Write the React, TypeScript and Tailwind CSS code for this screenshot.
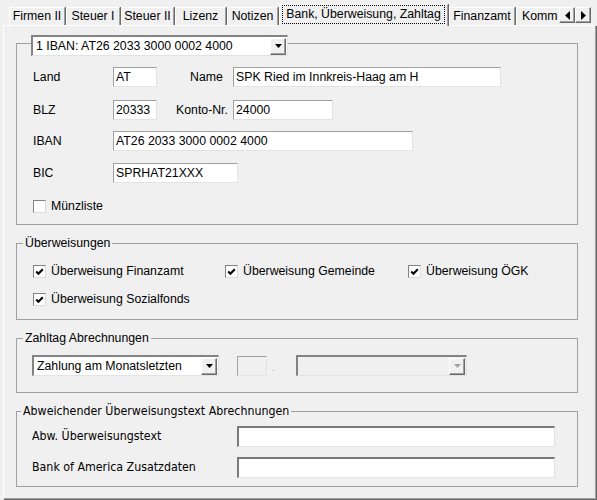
import React from "react";

const F = "font-['Liberation_Sans',Arial,sans-serif]";
const N = "font-['Liberation_Sans_Narrow','Arial_Narrow','DejaVu_Sans_Condensed',sans-serif]";

const Down = ({ gray }: { gray?: boolean }) => (
  <svg width="7" height="4" viewBox="0 0 7 4">
    <polygon points="0,0 7,0 3.5,4" fill={gray ? "#a0a0a0" : "#000"} />
  </svg>
);

const Combo = ({ className, text, disabled }: { className: string; text?: string; disabled?: boolean }) => (
  <div
    className={`flex items-center h-[21px] border-t-2 border-l-2 border-r border-b border-t-[#838383] border-l-[#838383] border-r-[#e3e3e3] border-b-[#e3e3e3] ${
      disabled ? "bg-[#f0f0f0]" : "bg-white"
    } ${className}`}
  >
    <span className="pl-[3px] flex-1 whitespace-nowrap overflow-hidden">{text}</span>
    <span className="flex-none mr-[1px] w-[16px] h-[17px] flex items-center justify-center bg-[#f0f0f0] border-t border-l border-r border-b border-t-white border-l-white border-r-[#696969] border-b-[#696969] shadow-[inset_-1px_-1px_0_#a0a0a0]">
      <Down gray={disabled} />
    </span>
  </div>
);

const Input = ({ className, value }: { className: string; value?: string }) => (
  <div
    className={`flex-none h-[20px] bg-white border border-t-[#a0a0a0] border-l-[#a0a0a0] border-r-[#e3e3e3] border-b-[#e3e3e3] pl-[2px] flex items-center whitespace-nowrap ${className}`}
  >
    {value}
  </div>
);

const Input3D = ({ className }: { className: string }) => (
  <div
    className={`flex-none h-[21px] bg-white border-t-2 border-l-2 border-r border-b border-t-[#7a7a7a] border-l-[#7a7a7a] border-r-[#e3e3e3] border-b-[#e3e3e3] ${className}`}
  />
);

const Check = ({ checked }: { checked?: boolean }) => (
  <span className="flex-none w-[13px] h-[13px] bg-white border border-t-[#838383] border-l-[#838383] border-r-[#dcdcdc] border-b-[#dcdcdc] flex items-center justify-center">
    {checked && (
      <svg width="9" height="8" viewBox="0 0 9 8">
        <path d="M1.2 3.6 L3.4 5.8 L7.8 1.2" stroke="#000" strokeWidth="2.1" fill="none" />
      </svg>
    )}
  </span>
);

const CheckLabel = ({ className, label, checked }: { className: string; label: string; checked?: boolean }) => (
  <div className={`flex items-center flex-none ${className}`}>
    <Check checked={checked} />
    <span className="ml-[5px] whitespace-nowrap">{label}</span>
  </div>
);

const Tab = ({ className, children }: { className: string; children: React.ReactNode }) => (
  <div
    className={`flex-none h-[18px] mb-[1px] bg-[#f0f0f0] border-t border-l border-r border-t-white border-l-white border-r-[#a0a0a0] shadow-[1px_0_0_#696969] flex items-center justify-center whitespace-nowrap ${className}`}
  >
    {children}
  </div>
);

const ScrollBtn = ({ dir }: { dir: "l" | "r" }) => (
  <div className="w-[16px] h-[16px] bg-[#f0f0f0] border-t border-l border-r border-b border-t-white border-l-white border-r-[#696969] border-b-[#696969] shadow-[inset_-1px_-1px_0_#a0a0a0] flex items-center justify-center">
    <svg width="5" height="9" viewBox="0 0 5 9">
      <polygon points={dir === "l" ? "5,0 5,9 0,4.5" : "0,0 0,9 5,4.5"} fill="#000" />
    </svg>
  </div>
);

export default function App() {
  return (
    <div className={`w-[597px] h-[500px] bg-[#f0f0f0] overflow-hidden text-[12.3px] leading-[15px] text-black ${F}`}>
      {/* tab strip */}
      <div className="relative z-10 flex h-[26px]">
        <div className="flex items-end pl-[9px] w-[559px] overflow-hidden flex-none">
          <Tab className="w-[56px] mr-[1px]">Firmen II</Tab>
          <Tab className="w-[54px] mr-[1px]">Steuer I</Tab>
          <Tab className="w-[53px] mr-[1px]">Steuer II</Tab>
          <Tab className="w-[51px] mr-[1px]">Lizenz</Tab>
          <Tab className="w-[51px] mr-[1px]">Notizen</Tab>
          <div className="flex-none w-[169px] h-[22px] mr-[1px] bg-[#f0f0f0] border-t border-l border-r border-t-white border-l-white border-r-[#a0a0a0] shadow-[1px_0_0_#696969] px-[2px]">
            <div className="mt-0 h-[19px] border border-dotted border-black flex items-center justify-center whitespace-nowrap">
              Bank, Überweisung, Zahltag
            </div>
          </div>
          <Tab className="w-[66px] mr-[1px]">Finanzamt</Tab>
          <div className="flex-none w-[43px] h-[18px] mb-[1px] bg-[#f0f0f0] border-t border-l border-t-white border-l-white flex items-center pl-[5px] whitespace-nowrap">
            Komm
          </div>
        </div>
        <div className="flex mt-[7px]">
          <ScrollBtn dir="l" />
          <ScrollBtn dir="r" />
        </div>
      </div>

      {/* panel */}
      <div className="relative -mt-[1px] ml-[3px] w-[593px] h-[474px] border border-t-white border-l-white border-r-[#a0a0a0] border-b-[#a0a0a0] shadow-[1px_1px_0_#696969] pl-[12px]">
        {/* Bank */}
        <fieldset className="mt-[5px] w-[562px] border border-[#a0a0a0]">
          <legend className="ml-[14px] pt-[4px]">
            <Combo className="w-[257px]" text="1 IBAN: AT26 2033 3000 0002 4000" />
          </legend>
          <div className="pl-[16px] pb-[11px]">
            <div className="mt-[11px] flex items-center h-[20px]">
              <span className="w-[80px] flex-none">Land</span>
              <Input className="w-[44px]" value="AT" />
              <span className="ml-[33px] w-[43px] flex-none">Name</span>
              <Input className="w-[268px]" value="SPK Ried im Innkreis-Haag am H" />
            </div>
            <div className="mt-[13px] flex items-center h-[20px]">
              <span className="w-[80px] flex-none">BLZ</span>
              <Input className="w-[44px]" value="20333" />
              <span className="ml-[19px] w-[57px] flex-none whitespace-nowrap">Konto-Nr.</span>
              <Input className="w-[100px]" value="24000" />
            </div>
            <div className="mt-[11px] flex items-center h-[20px]">
              <span className="w-[80px] flex-none">IBAN</span>
              <Input className="w-[300px]" value="AT26 2033 3000 0002 4000" />
            </div>
            <div className="mt-[12px] flex items-center h-[20px]">
              <span className="w-[80px] flex-none">BIC</span>
              <Input className="w-[125px]" value="SPRHAT21XXX" />
            </div>
            <div className="mt-[17px] flex items-center h-[13px]">
              <CheckLabel className="" label="Münzliste" />
            </div>
          </div>
        </fieldset>

        {/* Überweisungen */}
        <fieldset className="mt-[11px] w-[562px] border border-[#a0a0a0]">
          <legend className="ml-[6px] px-[2px]">Überweisungen</legend>
          <div className="pl-[16px] pb-[12px]">
            <div className="mt-[13px] flex items-center h-[15px]">
              <CheckLabel className="w-[192px]" label="Überweisung Finanzamt" checked />
              <CheckLabel className="w-[183px]" label="Überweisung Gemeinde" checked />
              <CheckLabel className="" label="Überweisung ÖGK" checked />
            </div>
            <div className="mt-[13px] flex items-center h-[15px]">
              <CheckLabel className="" label="Überweisung Sozialfonds" checked />
            </div>
          </div>
        </fieldset>

        {/* Zahltag */}
        <fieldset className="mt-[11px] w-[562px] border border-[#a0a0a0]">
          <legend className="ml-[6px] px-[2px]">Zahltag Abrechnungen</legend>
          <div className="pl-[15px] pb-[16px]">
            <div className="mt-[9px] flex items-center h-[21px]">
              <Combo className="w-[187px] flex-none" text="Zahlung am Monatsletzten" />
              <div className="ml-[18px] w-[30px] h-[20px] flex-none bg-[#f0f0f0] border border-t-[#a0a0a0] border-l-[#a0a0a0] border-r-[#e3e3e3] border-b-[#e3e3e3]" />
              <span className="ml-[6px] mt-[10px] w-[1px] h-[1px] bg-[#a0a0a0] flex-none" />
              <Combo className="ml-[22px] w-[171px] flex-none" disabled />
            </div>
          </div>
        </fieldset>

        {/* Abweichender */}
        <fieldset className={`mt-[11px] w-[562px] border border-[#a0a0a0] ${N}`}>
          <legend className="ml-[4px] px-[2px]">Abweichender Überweisungstext Abrechnungen</legend>
          <div className="pl-[15px] pb-[8px]">
            <div className="mt-[7px] flex items-center h-[21px]">
              <span className="w-[205px] flex-none">Abw. Überweisungstext</span>
              <Input3D className="w-[318px]" />
            </div>
            <div className="mt-[10px] flex items-center h-[21px]">
              <span className="w-[205px] flex-none">Bank of America Zusatzdaten</span>
              <Input3D className="w-[318px]" />
            </div>
          </div>
        </fieldset>
      </div>
    </div>
  );
}
